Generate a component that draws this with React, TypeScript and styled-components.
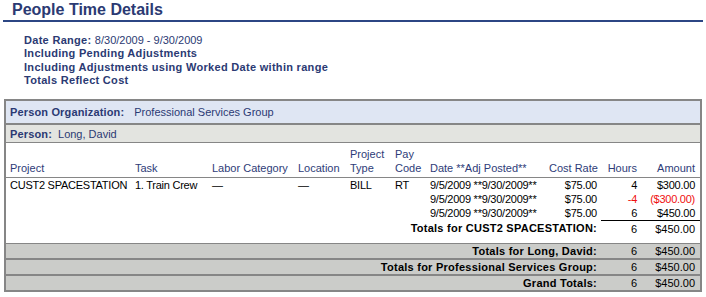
import styled, { createGlobalStyle } from 'styled-components';

const GlobalStyle = createGlobalStyle`
  body {
    margin: 0;
    background: #ffffff;
    font-family: 'Liberation Sans', Arial, sans-serif;
    font-size: 11px;
    color: #000000;
  }
`;

const Title = styled.h1`
  margin: 0 3px;
  padding-left: 9px;
  height: 20px;
  line-height: 20px;
  font-size: 16px;
  font-weight: bold;
  color: #2b3a73;
  border-bottom: 2px solid #2c4684;
`;

const Criteria = styled.div`
  padding: 11.5px 0 11.5px 24px;
  line-height: 13.5px;
  font-weight: bold;
  letter-spacing: 0.3px;
  color: #2b3a73;
`;

const Plain = styled.span`
  font-weight: normal;
  letter-spacing: 0;
`;

const ReportBox = styled.div`
  margin: 0 4px;
  border: 2px solid #868686;
`;

const GroupBar = styled.div<{ $tone: 'org' | 'person' }>`
  display: flex;
  align-items: center;
  gap: 4px;
  padding-left: 4px;
  height: ${(p) => (p.$tone === 'org' ? '22px' : '17px')};
  background: ${(p) => (p.$tone === 'org' ? '#dfe6f3' : '#e3e4e0')};
  border-bottom: ${(p) => (p.$tone === 'org' ? '2px' : '1px')} solid #868686;
  color: #2b3a73;
`;

const BarLabel = styled.b<{ $gap?: number }>`
  margin-right: ${(p) => p.$gap ?? 4}px;
  letter-spacing: 0.15px;
`;

const Grid = styled.table`
  width: 100%;
  table-layout: fixed;
  border-collapse: separate;
  border-spacing: 0;
`;

const HeadCell = styled.th<{ $right?: boolean }>`
  height: 27px;
  padding: 5px 4px 2px;
  padding-right: ${(p) => (p.$right ? '4px' : '0')};
  vertical-align: bottom;
  text-align: ${(p) => (p.$right ? 'right' : 'left')};
  font-weight: normal;
  line-height: 13.7px;
  color: #2e3c78;
  border-bottom: 1px solid #868686;
  white-space: nowrap;
`;

const Cell = styled.td<{ $right?: boolean; $neg?: boolean }>`
  padding: 0 ${(p) => (p.$right ? '4px' : '0')} 0 ${(p) => (p.$right ? '0' : '4px')};
  line-height: 14px;
  letter-spacing: -0.25px;
  text-align: ${(p) => (p.$right ? 'right' : 'left')};
  color: ${(p) => (p.$neg ? '#f01010' : '#000000')};
  white-space: nowrap;
`;

const SubLabel = styled.td`
  padding: 1px 4px 7px 0;
  line-height: 14px;
  text-align: right;
  font-weight: bold;
  letter-spacing: 0.25px;
  vertical-align: top;
`;

const SubNum = styled.td`
  padding: 1px 4px 7px 0;
  line-height: 14px;
  text-align: right;
  vertical-align: top;
  border-top: 1px solid #000000;
`;

const TotalCell = styled.td<{ $first?: boolean; $bold?: boolean }>`
  padding: 0 4px 0 0;
  height: 14px;
  line-height: 14px;
  text-align: right;
  font-weight: ${(p) => (p.$bold ? 'bold' : 'normal')};
  letter-spacing: ${(p) => (p.$bold ? '0.25px' : '0')};
  background: #cbccc9;
  border-top: ${(p) => (p.$first ? '1px' : '2px')} solid #868686;
`;

const widths = [125, 77, 86, 52, 45, 35, 119, 56, 40, 59];

type Entry = { date: string; rate: string; hours: string; amount: string; neg?: boolean };

const entries: Entry[] = [
  { date: '9/5/2009 **9/30/2009**', rate: '$75.00', hours: '4', amount: '$300.00' },
  { date: '9/5/2009 **9/30/2009**', rate: '$75.00', hours: '-4', amount: '($300.00)', neg: true },
  { date: '9/5/2009 **9/30/2009**', rate: '$75.00', hours: '6', amount: '$450.00' },
];

const totals = [
  'Totals for Long, David:',
  'Totals for Professional Services Group:',
  'Grand Totals:',
];

const App = () => (
  <>
    <GlobalStyle />
    <Title>People Time Details</Title>
    <Criteria>
      <div>
        Date Range: <Plain>8/30/2009 - 9/30/2009</Plain>
      </div>
      <div>Including Pending Adjustments</div>
      <div>Including Adjustments using Worked Date within range</div>
      <div>Totals Reflect Cost</div>
    </Criteria>
    <ReportBox>
      <GroupBar $tone='org'>
        <BarLabel $gap={6}>Person Organization:</BarLabel>
        <span>Professional Services Group</span>
      </GroupBar>
      <GroupBar $tone='person'>
        <BarLabel $gap={2}>Person:</BarLabel>
        <span>Long, David</span>
      </GroupBar>
      <Grid>
        <colgroup>
          {widths.map((w, i) => (
            <col key={i} style={{ width: w }} />
          ))}
        </colgroup>
        <thead>
          <tr>
            <HeadCell>Project</HeadCell>
            <HeadCell>Task</HeadCell>
            <HeadCell>Labor Category</HeadCell>
            <HeadCell>Location</HeadCell>
            <HeadCell>
              Project
              <br />
              Type
            </HeadCell>
            <HeadCell>
              Pay
              <br />
              Code
            </HeadCell>
            <HeadCell>Date **Adj Posted**</HeadCell>
            <HeadCell $right>Cost Rate</HeadCell>
            <HeadCell $right>Hours</HeadCell>
            <HeadCell $right style={{ paddingRight: 5 }}>
              Amount
            </HeadCell>
          </tr>
        </thead>
        <tbody>
          {entries.map((e, i) => (
            <tr key={i}>
              <Cell>{i === 0 ? 'CUST2 SPACESTATION' : ''}</Cell>
              <Cell>{i === 0 ? '1. Train Crew' : ''}</Cell>
              <Cell>{i === 0 ? '—' : ''}</Cell>
              <Cell>{i === 0 ? '—' : ''}</Cell>
              <Cell>{i === 0 ? 'BILL' : ''}</Cell>
              <Cell>{i === 0 ? 'RT' : ''}</Cell>
              <Cell>{e.date}</Cell>
              <Cell $right>{e.rate}</Cell>
              <Cell $right $neg={e.neg}>
                {e.hours}
              </Cell>
              <Cell $right $neg={e.neg} style={{ paddingRight: 5 }}>
                {e.amount}
              </Cell>
            </tr>
          ))}
          <tr>
            <SubLabel colSpan={8}>Totals for CUST2 SPACESTATION:</SubLabel>
            <SubNum>6</SubNum>
            <SubNum style={{ paddingRight: 5 }}>$450.00</SubNum>
          </tr>
          {totals.map((label, i) => (
            <tr key={label}>
              <TotalCell colSpan={8} $bold $first={i === 0}>
                {label}
              </TotalCell>
              <TotalCell $first={i === 0}>6</TotalCell>
              <TotalCell $first={i === 0} style={{ paddingRight: 5 }}>
                $450.00
              </TotalCell>
            </tr>
          ))}
        </tbody>
      </Grid>
    </ReportBox>
  </>
);

export default App;
